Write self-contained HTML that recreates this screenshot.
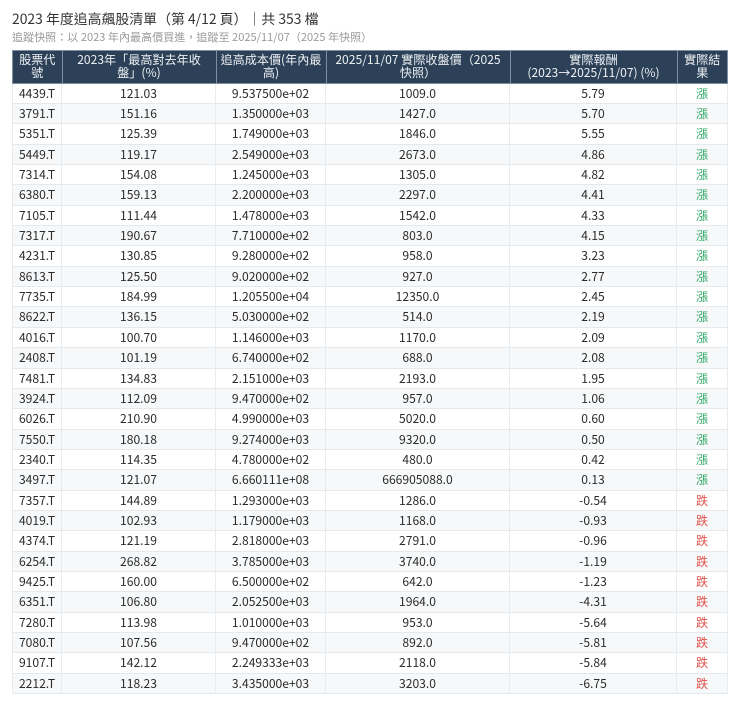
<!DOCTYPE html>
<html lang="zh-Hant">
<head>
<meta charset="utf-8">
<title>2023 年度追高飆股清單</title>
<style>
html,body{margin:0;padding:0;background:#fff;}
body{width:740px;height:706px;overflow:hidden;position:relative;font-family:"Noto Sans CJK TC","Liberation Sans",sans-serif;color:#2b2b2b;}
h1{position:absolute;left:12px;top:9px;margin:0;font-size:13.9px;line-height:20px;font-weight:400;color:#333;white-space:nowrap;filter:blur(.25px);}
p{position:absolute;left:12px;top:29px;margin:0;font-size:11.07px;line-height:16px;color:#9a9a9a;white-space:nowrap;filter:blur(.25px);}
#t{position:absolute;left:12px;top:50px;width:716px;filter:blur(.25px);}
.r{display:flex;height:20.35px;box-sizing:border-box;border-bottom:1px solid #e6e9ec;font-size:12.1px;line-height:20.6px;text-align:center;}
.r:nth-child(odd){background:#f7f8f9;}
.r span{display:block;box-sizing:border-box;border-right:1px solid #e9ecef;white-space:nowrap;}
.r span:first-child{border-left:1px solid #e9ecef;}
.h{display:flex;height:33.7px;background:#2c4158;color:#eef1f4;font-size:12.1px;line-height:12.5px;text-align:center;border:1px solid #7d8fa1;box-sizing:border-box;}
.h span{display:flex;align-items:center;justify-content:center;box-sizing:border-box;border-right:1px solid #7d8fa1;padding:0 4px;}
.h span:last-child{border-right:0;}
.h .b{padding:0 12px;}
.a{width:50px;}.b{width:154px;}.c{width:110px;}.d{width:184px;}.e{width:167px;}.f{width:51px;}
.h .a{width:49.5px;}.h .f{width:49.5px;}
.u{color:#2fa866;}.x{color:#e0524a;}
</style>
</head>
<body>
<h1>2023 年度追高飆股清單（第 4/12 頁）｜共 353 檔</h1>
<p>追蹤快照：以 2023 年內最高價買進，追蹤至 2025/11/07（2025 年快照）</p>
<div id="t">
<div class="h"><span class="a">股票代號</span><span class="b">2023年「最高對去年收盤」(%)</span><span class="c">追高成本價(年內最高)</span><span class="d">2025/11/07 實際收盤價（2025快照）</span><span class="e">實際報酬<br>(2023→2025/11/07) (%)</span><span class="f">實際結果</span></div>
<div class="r"><span class="a">4439.T</span><span class="b">121.03</span><span class="c">9.537500e+02</span><span class="d">1009.0</span><span class="e">5.79</span><span class="f u">漲</span></div>
<div class="r"><span class="a">3791.T</span><span class="b">151.16</span><span class="c">1.350000e+03</span><span class="d">1427.0</span><span class="e">5.70</span><span class="f u">漲</span></div>
<div class="r"><span class="a">5351.T</span><span class="b">125.39</span><span class="c">1.749000e+03</span><span class="d">1846.0</span><span class="e">5.55</span><span class="f u">漲</span></div>
<div class="r"><span class="a">5449.T</span><span class="b">119.17</span><span class="c">2.549000e+03</span><span class="d">2673.0</span><span class="e">4.86</span><span class="f u">漲</span></div>
<div class="r"><span class="a">7314.T</span><span class="b">154.08</span><span class="c">1.245000e+03</span><span class="d">1305.0</span><span class="e">4.82</span><span class="f u">漲</span></div>
<div class="r"><span class="a">6380.T</span><span class="b">159.13</span><span class="c">2.200000e+03</span><span class="d">2297.0</span><span class="e">4.41</span><span class="f u">漲</span></div>
<div class="r"><span class="a">7105.T</span><span class="b">111.44</span><span class="c">1.478000e+03</span><span class="d">1542.0</span><span class="e">4.33</span><span class="f u">漲</span></div>
<div class="r"><span class="a">7317.T</span><span class="b">190.67</span><span class="c">7.710000e+02</span><span class="d">803.0</span><span class="e">4.15</span><span class="f u">漲</span></div>
<div class="r"><span class="a">4231.T</span><span class="b">130.85</span><span class="c">9.280000e+02</span><span class="d">958.0</span><span class="e">3.23</span><span class="f u">漲</span></div>
<div class="r"><span class="a">8613.T</span><span class="b">125.50</span><span class="c">9.020000e+02</span><span class="d">927.0</span><span class="e">2.77</span><span class="f u">漲</span></div>
<div class="r"><span class="a">7735.T</span><span class="b">184.99</span><span class="c">1.205500e+04</span><span class="d">12350.0</span><span class="e">2.45</span><span class="f u">漲</span></div>
<div class="r"><span class="a">8622.T</span><span class="b">136.15</span><span class="c">5.030000e+02</span><span class="d">514.0</span><span class="e">2.19</span><span class="f u">漲</span></div>
<div class="r"><span class="a">4016.T</span><span class="b">100.70</span><span class="c">1.146000e+03</span><span class="d">1170.0</span><span class="e">2.09</span><span class="f u">漲</span></div>
<div class="r"><span class="a">2408.T</span><span class="b">101.19</span><span class="c">6.740000e+02</span><span class="d">688.0</span><span class="e">2.08</span><span class="f u">漲</span></div>
<div class="r"><span class="a">7481.T</span><span class="b">134.83</span><span class="c">2.151000e+03</span><span class="d">2193.0</span><span class="e">1.95</span><span class="f u">漲</span></div>
<div class="r"><span class="a">3924.T</span><span class="b">112.09</span><span class="c">9.470000e+02</span><span class="d">957.0</span><span class="e">1.06</span><span class="f u">漲</span></div>
<div class="r"><span class="a">6026.T</span><span class="b">210.90</span><span class="c">4.990000e+03</span><span class="d">5020.0</span><span class="e">0.60</span><span class="f u">漲</span></div>
<div class="r"><span class="a">7550.T</span><span class="b">180.18</span><span class="c">9.274000e+03</span><span class="d">9320.0</span><span class="e">0.50</span><span class="f u">漲</span></div>
<div class="r"><span class="a">2340.T</span><span class="b">114.35</span><span class="c">4.780000e+02</span><span class="d">480.0</span><span class="e">0.42</span><span class="f u">漲</span></div>
<div class="r"><span class="a">3497.T</span><span class="b">121.07</span><span class="c">6.660111e+08</span><span class="d">666905088.0</span><span class="e">0.13</span><span class="f u">漲</span></div>
<div class="r"><span class="a">7357.T</span><span class="b">144.89</span><span class="c">1.293000e+03</span><span class="d">1286.0</span><span class="e">-0.54</span><span class="f x">跌</span></div>
<div class="r"><span class="a">4019.T</span><span class="b">102.93</span><span class="c">1.179000e+03</span><span class="d">1168.0</span><span class="e">-0.93</span><span class="f x">跌</span></div>
<div class="r"><span class="a">4374.T</span><span class="b">121.19</span><span class="c">2.818000e+03</span><span class="d">2791.0</span><span class="e">-0.96</span><span class="f x">跌</span></div>
<div class="r"><span class="a">6254.T</span><span class="b">268.82</span><span class="c">3.785000e+03</span><span class="d">3740.0</span><span class="e">-1.19</span><span class="f x">跌</span></div>
<div class="r"><span class="a">9425.T</span><span class="b">160.00</span><span class="c">6.500000e+02</span><span class="d">642.0</span><span class="e">-1.23</span><span class="f x">跌</span></div>
<div class="r"><span class="a">6351.T</span><span class="b">106.80</span><span class="c">2.052500e+03</span><span class="d">1964.0</span><span class="e">-4.31</span><span class="f x">跌</span></div>
<div class="r"><span class="a">7280.T</span><span class="b">113.98</span><span class="c">1.010000e+03</span><span class="d">953.0</span><span class="e">-5.64</span><span class="f x">跌</span></div>
<div class="r"><span class="a">7080.T</span><span class="b">107.56</span><span class="c">9.470000e+02</span><span class="d">892.0</span><span class="e">-5.81</span><span class="f x">跌</span></div>
<div class="r"><span class="a">9107.T</span><span class="b">142.12</span><span class="c">2.249333e+03</span><span class="d">2118.0</span><span class="e">-5.84</span><span class="f x">跌</span></div>
<div class="r"><span class="a">2212.T</span><span class="b">118.23</span><span class="c">3.435000e+03</span><span class="d">3203.0</span><span class="e">-6.75</span><span class="f x">跌</span></div>
</div>
</body>
</html>
